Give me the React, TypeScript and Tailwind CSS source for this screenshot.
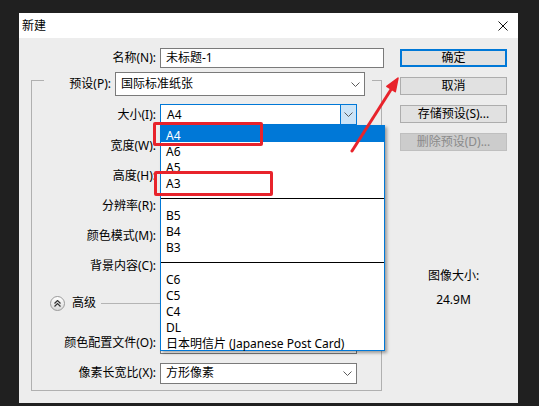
import React from "react";

function Chevron() {
  return (
    <svg width="9" height="5" viewBox="0 0 9 5" className="shrink-0">
      <path d="M0.5 0.5 L4.5 4.5 L8.5 0.5" fill="none" stroke="#5a5a5a" strokeWidth="1" />
    </svg>
  );
}

function Row({ label, h, children }: { label: string; h: string; children?: React.ReactNode }) {
  return (
    <div className={`flex items-center ${h}`}>
      <div className="w-[124px] text-right whitespace-nowrap">{label}</div>
      {children}
    </div>
  );
}

const sizes: { t: string; sel?: boolean; sep?: boolean }[] = [
  { t: "A4", sel: true },
  { t: "A6" },
  { t: "A5" },
  { t: "A3" },
  { t: "", sep: true },
  { t: "B5" },
  { t: "B4" },
  { t: "B3" },
  { t: "", sep: true },
  { t: "C6" },
  { t: "C5" },
  { t: "C4" },
  { t: "DL" },
  { t: "日本明信片 (Japanese Post Card)" },
];

export default function App() {
  return (
    <div className="w-[539px] h-[406px] overflow-hidden bg-[#202020] pt-[13px] pl-[19px] font-['Noto_Sans','Noto_Sans_CJK_SC',sans-serif] text-[12px] leading-[16px] text-black">
      <div className="relative w-[499px] h-[390px] bg-[#ededed] flex flex-col">
        {/* title bar */}
        <div className="h-[25px] bg-white flex items-center justify-between pl-[3px] pr-[10px]">
          <span>新建</span>
          <svg width="10" height="10" viewBox="0 0 10 10">
            <path d="M0.5 0.5 L9.5 9.5 M9.5 0.5 L0.5 9.5" stroke="#111" strokeWidth="1" />
          </svg>
        </div>

        <div className="flex pt-[10px]">
          {/* left */}
          <div className="w-[381px]">
            <div className="flex items-center h-[20px]">
              <div className="w-[137px] text-right">名称(N):</div>
              <div className="ml-[4px] w-[224px] h-[20px] bg-white border border-[#7a7a7a] flex items-center pl-[5px]">
                未标题-1
              </div>
            </div>

            <div className="ml-[12px] mt-[12px] w-[351px] border border-[#b0b0b0] pb-[5px]">
              <div className="-mt-[9px] mb-[3px] ml-[12px] w-[328px] h-[24px] bg-[#ededed] flex items-center">
                <div className="w-[67px] text-right">预设(P):</div>
                <div className="ml-[4px] w-[250px] h-[24px] bg-white border border-[#7a7a7a] flex items-center justify-between pl-[5px] pr-[4px]">
                  <span>国际标准纸张</span>
                  <Chevron />
                </div>
              </div>

              <Row label="大小(I):" h="h-[31px]">
                <div className="ml-[4px] w-[197px] h-[21px] bg-white border border-[#0078d7] flex items-center justify-between pl-[6px]">
                  <span>A4</span>
                  <div className="w-[16px] h-full bg-[#cce4f7] border-l border-[#0078d7] flex items-center justify-center">
                    <Chevron />
                  </div>
                </div>
              </Row>
              <Row label="宽度(W):" h="h-[31px]" />
              <Row label="高度(H):" h="h-[30px]" />
              <Row label="分辨率(R):" h="h-[30px]" />
              <Row label="颜色模式(M):" h="h-[30px]" />
              <Row label="背景内容(C):" h="h-[30px]" />

              <div className="flex items-center h-[44px]">
                <div className="ml-[18px] w-[15px] h-[15px] rounded-full border border-[#9a9a9a] bg-linear-to-b from-white to-[#dadada] flex items-center justify-center">
                  <svg width="7" height="7" viewBox="0 0 7 7">
                    <path d="M0.5 3.5 L3.5 0.5 L6.5 3.5 M0.5 6.5 L3.5 3.5 L6.5 6.5" fill="none" stroke="#333" strokeWidth="1.2" />
                  </svg>
                </div>
                <span className="ml-[7px]">高级</span>
                <div className="ml-[5px] mr-[8px] flex-1 h-px bg-[#b4b4b4]" />
              </div>

              <Row label="颜色配置文件(O):" h="h-[36px]">
                <div className="ml-[4px] w-[197px] h-[21px] bg-white border border-[#7a7a7a]" />
              </Row>
              <Row label="像素长宽比(X):" h="h-[24px]">
                <div className="ml-[4px] w-[197px] h-[21px] bg-white border border-[#7a7a7a] flex items-center justify-between pl-[5px] pr-[4px]">
                  <span>方形像素</span>
                  <Chevron />
                </div>
              </Row>
            </div>
          </div>

          {/* right */}
          <div className="w-[107px] flex flex-col">
            <div className="mt-[1px] h-[18px] border-2 border-[#0078d7] bg-[#e1e1e1] flex items-center justify-center">确定</div>
            <div className="mt-[10px] h-[18px] border border-[#adadad] bg-[#e1e1e1] flex items-center justify-center">取消</div>
            <div className="mt-[10px] h-[18px] border border-[#adadad] bg-[#e1e1e1] flex items-center justify-center">存储预设(S)...</div>
            <div className="mt-[10px] h-[18px] border border-[#bfbfbf] bg-[#cccccc] text-[#8a8a8a] flex items-center justify-center">删除预设(D)...</div>
            <div className="mt-[117px] text-center">图像大小:</div>
            <div className="mt-[8px] text-center">24.9M</div>
          </div>
        </div>

        {/* open dropdown list */}
        <div className="absolute left-[141px] top-[112px] w-[225px] bg-white border border-[#0078d7] shadow-[2px_2px_3px_rgba(0,0,0,0.35)]">
          {sizes.map((s, i) =>
            s.sep ? (
              <div key={i} className="h-[16px] flex items-center">
                <div className="w-full h-px bg-black" />
              </div>
            ) : (
              <div
                key={i}
                className={`h-[16px] pl-[5px] pt-[3px] flex items-center whitespace-nowrap ${s.sel ? "bg-[#0078d7] text-white" : ""}`}
              >
                {s.t}
              </div>
            )
          )}
        </div>

        {/* annotations */}
        <div className="absolute left-[134px] top-[109px] w-[110px] h-[24px] border-[3px] border-[#e8232b] rounded-[2px]" />
        <div className="absolute left-[135px] top-[158px] w-[119px] h-[25px] border-[3px] border-[#e8232b] rounded-[2px]" />
        <svg className="absolute left-[325px] top-[58px]" width="65" height="90" viewBox="0 0 65 90">
          <path d="M8 80 L48 17" stroke="#e8232b" strokeWidth="3" strokeLinecap="round" />
          <polygon points="54,7 51.3,20.7 42.8,15.3" fill="#e8232b" stroke="#e8232b" strokeWidth="1.5" strokeLinejoin="round" />
        </svg>
      </div>
    </div>
  );
}
